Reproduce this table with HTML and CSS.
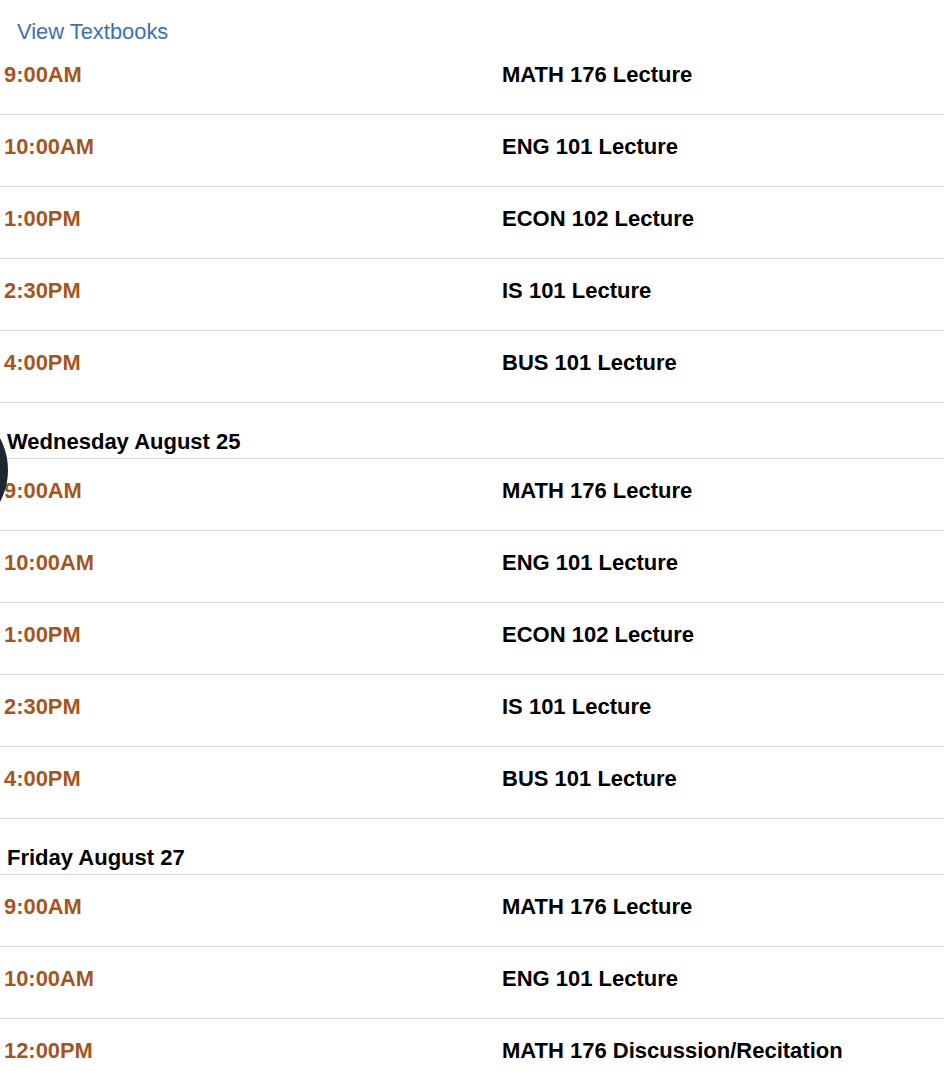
FILE: index.html
```html
<!DOCTYPE html>
<html lang="en">
<head>
<meta charset="utf-8">
<title>Schedule</title>
<link rel="stylesheet" href="styles.css">
</head>
<body>
<div class="page">
  <div class="links"><a class="link" href="#">View Textbooks</a></div>

  <div class="row"><span class="time">9:00AM</span><span class="course">MATH 176 Lecture</span></div>
  <div class="row"><span class="time">10:00AM</span><span class="course">ENG 101 Lecture</span></div>
  <div class="row"><span class="time">1:00PM</span><span class="course">ECON 102 Lecture</span></div>
  <div class="row"><span class="time">2:30PM</span><span class="course">IS 101 Lecture</span></div>
  <div class="row"><span class="time">4:00PM</span><span class="course">BUS 101 Lecture</span></div>

  <div class="day">Wednesday August 25</div>
  <div class="row"><span class="time">9:00AM</span><span class="course">MATH 176 Lecture</span></div>
  <div class="row"><span class="time">10:00AM</span><span class="course">ENG 101 Lecture</span></div>
  <div class="row"><span class="time">1:00PM</span><span class="course">ECON 102 Lecture</span></div>
  <div class="row"><span class="time">2:30PM</span><span class="course">IS 101 Lecture</span></div>
  <div class="row"><span class="time">4:00PM</span><span class="course">BUS 101 Lecture</span></div>

  <div class="day">Friday August 27</div>
  <div class="row"><span class="time">9:00AM</span><span class="course">MATH 176 Lecture</span></div>
  <div class="row"><span class="time">10:00AM</span><span class="course">ENG 101 Lecture</span></div>
  <div class="row"><span class="time">12:00PM</span><span class="course">MATH 176 Discussion/Recitation</span></div>

  <div class="fab"></div>
</div>
</body>
</html>
```
FILE: styles.css
```css
html, body {
  margin: 0;
  padding: 0;
  background: #ffffff;
}
body {
  font-family: "Liberation Sans", Arial, sans-serif;
  font-size: 22px;
  line-height: 24px;
  color: #000;
  overflow: hidden;
}
.page {
  position: relative;
  width: 944px;
}
.links {
  height: 43px;
  box-sizing: border-box;
  padding: 20px 0 0 17px;
}
.link {
  color: #3b6fb8;
  text-decoration: none;
  font-size: 21.9px;
}
.row {
  display: grid;
  grid-template-columns: 498px 1fr;
  align-items: center;
  box-sizing: border-box;
  height: 72px;
  padding: 0 0 8px 4px;
  border-bottom: 1px solid #d6d6d6;
}
.time {
  color: #a5561c;
  font-weight: bold;
  font-size: 21.9px;
  line-height: 24px;
}
.course {
  font-weight: bold;
  color: #000;
  font-size: 22px;
  line-height: 24px;
}
.day {
  font-weight: bold;
  font-size: 22px;
  height: 56px;
  box-sizing: border-box;
  padding: 27px 0 0 7px;
  border-bottom: 1px solid #d6d6d6;
}
.fab {
  position: absolute;
  left: -128px;
  top: 402px;
  width: 136px;
  height: 136px;
  border-radius: 50%;
  background: #1d2734;
}
```
